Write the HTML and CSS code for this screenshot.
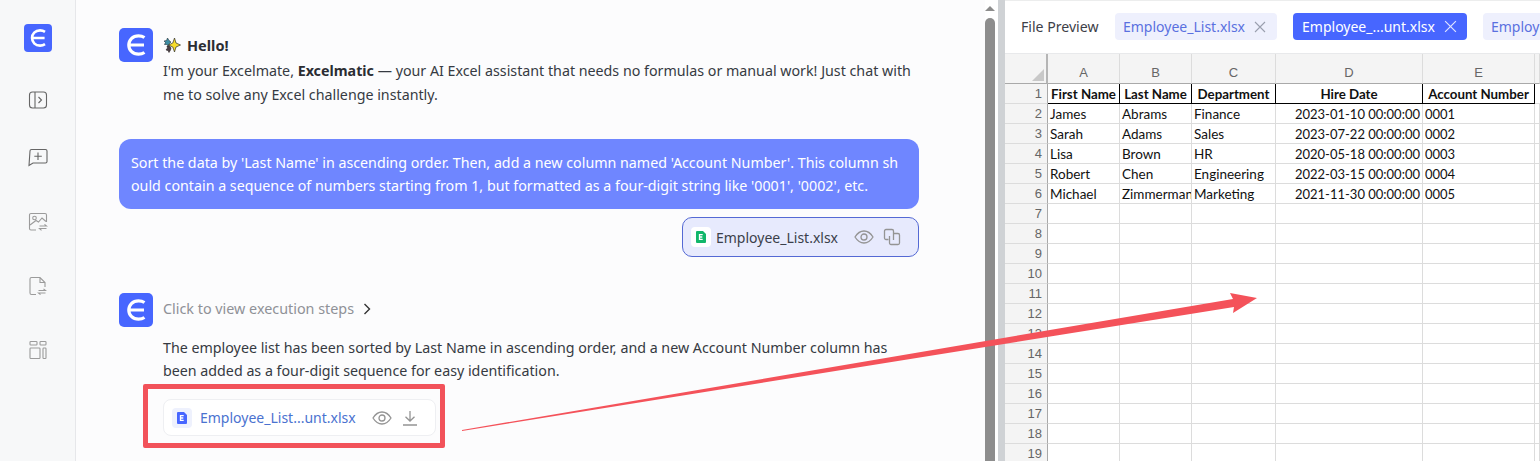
FILE: index.html
```html
<!DOCTYPE html>
<html lang="en">
<head>
<meta charset="utf-8">
<title>Excelmatic</title>
<link rel="stylesheet" href="styles.css">
</head>
<body>
<div class="app">
  <aside class="sidebar">
    <div class="logo small"><svg viewBox="0 0 34 34"><path d="M25.500 9.500C23.500 8.200 21.500 7.800 19.500 7.800C13.500 7.800 9.800 12 9.800 17C9.800 22 13.500 26.200 19.500 26.200C21.500 26.200 23.500 25.800 25.500 24.500M10.500 17H25"/></svg></div>
    <div class="side-icon first"><svg viewBox="0 0 20 20"><rect x="1.500" y="2" width="17" height="16" rx="3"/><path d="M7 2V18M10.500 7L13.500 10L10.500 13"/></svg></div>
    <div class="side-icon second"><svg viewBox="0 0 20 20"><path d="M3.500 1.500H17.500A1.500 1.500 0 0 1 19 3V13.500A1.500 1.500 0 0 1 17.500 15H5L1 17.500L2 3A1.500 1.500 0 0 1 3.500 1.500Z"/><path d="M10 4.500V12M6.300 8.300H13.800"/></svg></div>
    <div class="side-icon muted"><svg viewBox="0 0 20 20"><path d="M8 18H3A1.500 1.500 0 0 1 1.500 16.500V3A1.500 1.500 0 0 1 3 1.500H17A1.500 1.500 0 0 1 18.500 3V10"/><circle cx="6.500" cy="6" r="1.800"/><path d="M2 13L8 8.500L10.500 10L14 6L18 9.500M11.500 14H18.500L16.500 12.300M18.500 16.500H11.500L13.500 18.300"/></svg></div>
    <div class="side-icon muted"><svg viewBox="0 0 20 20"><path d="M8 18.500H3.500A1.500 1.500 0 0 1 2 17V3A1.500 1.500 0 0 1 3.500 1.500H12L17 6.500V11M12 1.500V6.500H17"/><path d="M10.500 14.500H17.500L15.500 12.800M17.500 17H10.500L12.500 18.700"/></svg></div>
    <div class="side-icon muted"><svg viewBox="0 0 20 20"><rect x="2" y="1.500" width="7" height="3.500" rx=".8"/><rect x="12" y="1.500" width="6" height="3.500" rx=".8"/><rect x="2" y="8" width="10" height="10.500" rx=".8"/><rect x="15" y="8" width="3" height="10.500" rx=".8"/></svg></div>
  </aside>

  <main class="chat">
    <section class="msg greeting">
      <div class="logo"><svg viewBox="0 0 34 34"><path d="M25.500 9.500C23.500 8.200 21.500 7.800 19.500 7.800C13.500 7.800 9.800 12 9.800 17C9.800 22 13.500 26.200 19.500 26.200C21.500 26.200 23.500 25.800 25.500 24.500M10.500 17H25"/></svg></div>
      <div class="msg-body">
        <p class="hello"><svg class="sparkle" viewBox="0 0 18 16"><path class="spark-c" d="M1 4L3.500 3.500L4.500 1L6 3.500L8 5L6 7L5.500 9L3.500 7.500L1.500 7.500L2.500 5.500Z"/><path class="spark-b" d="M4 9L6.500 9L8 11L7.500 13L6 15.500L5 13.500L3 13L4.500 11Z"/><path class="spark-y" d="M11.500 1L13 6L17.500 8L13 10L11.500 15L9.800 10L5.500 8L9.800 6Z"/></svg><strong>Hello!</strong></p>
        <p>I'm your Excelmate, <strong>Excelmatic</strong> — your AI Excel assistant that needs no formulas or manual work! Just chat with me to solve any Excel challenge instantly.</p>
      </div>
    </section>

    <section class="bubble">Sort the data by 'Last Name' in ascending order. Then, add a new column named 'Account Number'. This column should contain a sequence of numbers starting from 1, but formatted as a four-digit string like '0001', '0002', etc.</section>

    <div class="attach-row">
      <div class="attach">
        <span class="file-badge green"><svg viewBox="0 0 14 14"><path class="fill" d="M3 1H9L12 4V12A1 1 0 0 1 11 13H3A1 1 0 0 1 2 12V2A1 1 0 0 1 3 1Z"/><path class="mark" d="M8.700 4.700H5.500V9.300H8.700M5.500 7H8.300"/></svg></span>
        <span class="attach-name">Employee_List.xlsx</span>
        <svg class="act eye" viewBox="0 0 20 14"><path d="M1 7C3.500 3 6.500 1 10 1C13.500 1 16.500 3 19 7C16.500 11 13.500 13 10 13C6.500 13 3.500 11 1 7Z"/><circle cx="10" cy="7" r="3"/></svg>
        <svg class="act copy" viewBox="0 0 18 18"><path d="M5.500 11.500H3A1.500 1.500 0 0 1 1.500 10V3A1.500 1.500 0 0 1 3 1.500H9A1.500 1.500 0 0 1 10.500 3V12"/><path d="M10.500 5.500H15A1.500 1.500 0 0 1 16.500 7V15A1.500 1.500 0 0 1 15 16.500H8A1.500 1.500 0 0 1 6.500 15V8"/></svg>
      </div>
    </div>

    <section class="msg reply">
      <div class="logo"><svg viewBox="0 0 34 34"><path d="M25.500 9.500C23.500 8.200 21.500 7.800 19.500 7.800C13.500 7.800 9.800 12 9.800 17C9.800 22 13.500 26.200 19.500 26.200C21.500 26.200 23.500 25.800 25.500 24.500M10.500 17H25"/></svg></div>
      <div class="msg-body">
        <p class="steps">Click to view execution steps<svg class="chev" viewBox="0 0 8 12"><path d="M1.500 1L6.500 6L1.500 11"/></svg></p>
        <p class="reply-text">The employee list has been sorted by Last Name in ascending order, and a new Account Number column has been added as a four-digit sequence for easy identification.</p>
        <div class="result">
          <span class="file-badge blue"><svg viewBox="0 0 14 14"><path class="fill" d="M3 1H9L12 4V12A1 1 0 0 1 11 13H3A1 1 0 0 1 2 12V2A1 1 0 0 1 3 1Z"/><path class="mark" d="M8.700 4.700H5.500V9.300H8.700M5.500 7H8.300"/></svg></span>
          <span class="result-name">Employee_List...unt.xlsx</span>
          <svg class="act eye" viewBox="0 0 20 14"><path d="M1 7C3.500 3 6.500 1 10 1C13.500 1 16.500 3 19 7C16.500 11 13.500 13 10 13C6.500 13 3.500 11 1 7Z"/><circle cx="10" cy="7" r="3"/></svg>
          <svg class="act down" viewBox="0 0 16 16"><path d="M8 1V11M3.500 6.700L8 11L12.500 6.700M1 15H15"/></svg>
        </div>
      </div>
    </section>
  </main>

  <div class="scrollbar"><span class="scroll-up"></span><span class="scroll-thumb"></span></div>
  <div class="divider"></div>

  <section class="preview">
    <header class="tabs">
      <span class="tabs-title">File Preview</span>
      <span class="tab">Employee_List.xlsx<svg viewBox="0 0 12 12"><path d="M1 1L11 11M11 1L1 11"/></svg></span>
      <span class="tab active">Employee_...unt.xlsx<svg viewBox="0 0 12 12"><path d="M1 1L11 11M11 1L1 11"/></svg></span>
      <span class="tab clipped">Employ</span>
    </header>
    <table class="sheet">
      <colgroup><col class="c0"><col class="c1"><col class="c2"><col class="c3"><col class="c4"><col class="c5"><col></colgroup>
      <thead>
        <tr><th class="corner"><span></span></th><th>A</th><th>B</th><th>C</th><th>D</th><th>E</th><th></th></tr>
      </thead>
      <tbody>
        <tr class="head"><th>1</th><td>First Name</td><td>Last Name</td><td>Department</td><td>Hire Date</td><td>Account Number</td><td></td></tr>
        <tr><th>2</th><td>James</td><td>Abrams</td><td>Finance</td><td class="num date">2023-01-10 00:00:00</td><td class="num">0001</td><td></td></tr>
        <tr><th>3</th><td>Sarah</td><td>Adams</td><td>Sales</td><td class="num date">2023-07-22 00:00:00</td><td class="num">0002</td><td></td></tr>
        <tr><th>4</th><td>Lisa</td><td>Brown</td><td>HR</td><td class="num date">2020-05-18 00:00:00</td><td class="num">0003</td><td></td></tr>
        <tr><th>5</th><td>Robert</td><td>Chen</td><td>Engineering</td><td class="num date">2022-03-15 00:00:00</td><td class="num">0004</td><td></td></tr>
        <tr><th>6</th><td>Michael</td><td>Zimmerman</td><td>Marketing</td><td class="num date">2021-11-30 00:00:00</td><td class="num">0005</td><td></td></tr>
        <tr><th>7</th><td></td><td></td><td></td><td></td><td></td><td></td></tr>
        <tr><th>8</th><td></td><td></td><td></td><td></td><td></td><td></td></tr>
        <tr><th>9</th><td></td><td></td><td></td><td></td><td></td><td></td></tr>
        <tr><th>10</th><td></td><td></td><td></td><td></td><td></td><td></td></tr>
        <tr><th>11</th><td></td><td></td><td></td><td></td><td></td><td></td></tr>
        <tr><th>12</th><td></td><td></td><td></td><td></td><td></td><td></td></tr>
        <tr><th>13</th><td></td><td></td><td></td><td></td><td></td><td></td></tr>
        <tr><th>14</th><td></td><td></td><td></td><td></td><td></td><td></td></tr>
        <tr><th>15</th><td></td><td></td><td></td><td></td><td></td><td></td></tr>
        <tr><th>16</th><td></td><td></td><td></td><td></td><td></td><td></td></tr>
        <tr><th>17</th><td></td><td></td><td></td><td></td><td></td><td></td></tr>
        <tr><th>18</th><td></td><td></td><td></td><td></td><td></td><td></td></tr>
        <tr><th>19</th><td></td><td></td><td></td><td></td><td></td><td></td></tr>
      </tbody>
    </table>
  </section>
</div>

<div class="highlight-box"></div>
<svg class="annotation" viewBox="0 0 1540 461"><polygon points="462,430 1233,299 1230,293 1257,298 1233,313 1234,307 462,431"/></svg>
</body>
</html>
```

FILE: styles.css
```css
* { box-sizing: border-box; }
html, body { margin: 0; height: 100%; }
body {
  position: relative;
  overflow: hidden;
  font-family: "Noto Sans", "Open Sans", sans-serif;
  font-size: 14.250px;
  color: #363a42;
  background: #fcfcfd;
}
p { margin: 0; }
strong { font-weight: 700; color: #2b2d33; }

.app { display: flex; width: 1540px; height: 461px; overflow: hidden; }

/* sidebar */
.sidebar {
  flex: 0 0 76px;
  display: flex;
  flex-direction: column;
  align-items: center;
  padding-top: 24px;
  padding-left: 1px;
  background: #f7f8f9;
  border-right: 1px solid #e6e7ea;
}
.logo {
  flex: 0 0 34px;
  width: 34px;
  height: 34px;
  border-radius: 5px;
  background: #4766ff;
}
.logo.small { flex: 0 0 28px; width: 28px; height: 28px; border-radius: 4px; }
.logo svg { display: block; width: 100%; height: 100%; fill: none; stroke: #fff; stroke-width: 3.200; }
.side-icon { flex: 0 0 20px; width: 20px; height: 20px; margin-top: 44px; }
.side-icon.first { margin-top: 38px; }
.side-icon.second { margin-top: 38px; }
.side-icon svg { display: block; width: 100%; height: 100%; fill: none; stroke: #666; stroke-width: 1.100; }
.side-icon.muted svg { stroke: #9b9b9b; }

/* chat */
.chat {
  flex: 0 0 909px;
  padding: 28px 66px 0 43px;
  overflow: hidden;
}
.msg { display: flex; gap: 10px; }
.msg-body { flex: 1; line-height: 24px; }
.hello { display: flex; align-items: center; gap: 6px; height: 33px; margin-bottom: -2px; font-size: 14.500px; }
.sparkle { width: 18px; height: 16px; }
.spark-y { fill: #f7dd2a; stroke: #2f2f28; stroke-width: .7; }
.spark-c { fill: #3d8ea3; stroke: #27333a; stroke-width: .6; }
.spark-b { fill: #4a3f44; stroke: #2b2427; stroke-width: .6; }

.bubble {
  margin-top: 32px;
  height: 70px;
  padding: 12px 14px 12px 12px;
  border-radius: 12px;
  background: #6f86ff;
  color: #fff;
  line-height: 23px;
  word-break: break-all;
}
.attach-row { display: flex; justify-content: flex-end; margin-top: 8px; }
.attach {
  display: flex;
  align-items: center;
  width: 237px;
  height: 40px;
  padding: 0 8px;
  border: 1px solid #5469d4;
  border-radius: 10px;
  background: #e7eafd;
}
.file-badge {
  display: flex;
  align-items: center;
  justify-content: center;
  flex: 0 0 20px;
  width: 20px;
  height: 20px;
  border-radius: 4px;
  background: #fff;
}
.file-badge svg { width: 14px; height: 14px; }
.file-badge .fill { stroke: none; }
.file-badge .mark { fill: none; stroke: #fff; stroke-width: 1.300; }
.file-badge.green .fill { fill: #12b76a; }
.file-badge.blue { background: #eef1fd; }
.file-badge.blue .fill { fill: #4766ff; }
.attach-name { margin-left: 5px; font-size: 14px; color: #3b3f4a; white-space: nowrap; }
.act { flex: 0 0 auto; fill: none; stroke: #949494; stroke-width: 1.300; }
.eye { width: 20px; height: 14px; }
.attach .eye { margin-left: 16px; }
.attach .copy { width: 18px; height: 18px; margin-left: 9px; }

.reply { margin-top: 36px; }
.steps { display: flex; align-items: center; height: 31px; color: #8f9197; font-size: 14.350px; }
.chev { width: 8px; height: 12px; margin-left: 9px; fill: none; stroke: #333; stroke-width: 1.400; }
.reply-text { margin-top: 12px; line-height: 23px; }
.result {
  display: flex;
  align-items: center;
  width: 273px;
  height: 37px;
  margin-top: 17px;
  padding: 0 8px;
  border: 1px solid #eeeff2;
  border-radius: 8px;
  background: #fff;
}
.result-name { margin-left: 8px; font-size: 14px; color: #4a72d0; white-space: nowrap; }
.result .eye { margin-left: 16px; }
.result .down { width: 16px; height: 16px; margin-left: 10px; }

/* scrollbar and divider */
.scrollbar {
  flex: 0 0 13px;
  display: flex;
  flex-direction: column;
  align-items: flex-start;
  background: #fff;
}
.scroll-up {
  width: 0;
  height: 0;
  margin: 6px 0 0 0;
  border-left: 5px solid transparent;
  border-right: 5px solid transparent;
  border-bottom: 5px solid #8c8c8c;
}
.scroll-thumb { flex: 1; width: 10px; margin-top: 7px; border-radius: 5px 5px 0 0; background: #8d8d8d; }
.divider { flex: 0 0 7px; background: #cfd2d5; }

/* preview */
.preview { flex: 0 0 535px; min-width: 0; background: #fff; overflow: hidden; border-top: 1px solid #eceded; }
.tabs {
  display: flex;
  align-items: center;
  gap: 16px;
  height: 53px;
  padding: 0 0 1px 16px;
  border-bottom: 1px solid #e8e9eb;
  white-space: nowrap;
  overflow: hidden;
}
.tabs-title { flex: 0 0 78px; font-size: 14.100px; color: #3d4048; }
.tab {
  flex: 0 0 auto;
  display: flex;
  align-items: center;
  gap: 9px;
  height: 27px;
  padding: 0 11px 0 8px;
  border-radius: 4px;
  background: #eef0fd;
  color: #5a70e0;
  font-size: 14px;
}
.tab svg { width: 12px; height: 12px; fill: none; stroke: #9a9fae; stroke-width: 1.100; }
.tab.active { background: #4766ff; color: #fff; padding: 0 10px 0 9px; }
.tab.active svg { width: 13px; height: 13px; stroke: #dfe4ff; }

/* sheet */
.sheet {
  table-layout: fixed;
  width: 535px;
  border-collapse: separate;
  border-spacing: 0;
  font-family: "Lato", "Liberation Sans", sans-serif;
  font-size: 13.500px;
  color: #111;
}
.c0 { width: 43px; }
.c1, .c2 { width: 72px; }
.c3 { width: 84px; }
.c4 { width: 147px; }
.c5 { width: 112px; }
.sheet th, .sheet td {
  height: 20px;
  padding: 1px 0 0;
  overflow: hidden;
  white-space: nowrap;
  font-weight: 400;
  line-height: 18px;
  border-right: 1px solid #dcdcdc;
  border-bottom: 1px solid #dcdcdc;
}
.sheet td { padding: 1px 2px 0; }
.sheet .num { font-size: 13px; }
.sheet tbody th {
  padding-right: 5px;
  text-align: right;
  background: #f4f4f4;
  color: #666;
  border-right-color: #a9a9a9;
  font-family: "Liberation Sans", sans-serif;
  font-size: 13px;
}
.sheet thead th {
  height: 30px;
  padding-top: 8px;
  text-align: center;
  background: #f4f4f4;
  color: #666;
  font-family: "Liberation Sans", sans-serif;
  font-size: 13px;
  border-bottom: 1px solid #a9a9a9;
}
.sheet thead .corner { position: relative; padding: 0; border-right: 2px solid #b5b5b5; }
.corner span {
  position: absolute;
  right: 2px;
  bottom: 2px;
  border-left: 12px solid transparent;
  border-bottom: 12px solid #c8c8c8;
}
.sheet .head td {
  padding: 1px 0 0;
  text-align: center;
  font-size: 13.300px;
  font-weight: 700;
  border-right: 1px solid #000;
  border-bottom: 1px solid #000;
}
.sheet .head td:last-child { font-weight: 400; border-right: 0; border-bottom: 1px solid #dcdcdc; }
.sheet .date { text-align: right; }

/* annotation layer */
.highlight-box {
  position: absolute;
  left: 143px;
  top: 384px;
  width: 302px;
  height: 64px;
  border: 5px solid #f2525a;
  border-radius: 2px;
}
.annotation { position: absolute; left: 0; top: 0; width: 1540px; height: 461px; pointer-events: none; }
.annotation polygon { fill: #f4525a; }
```
